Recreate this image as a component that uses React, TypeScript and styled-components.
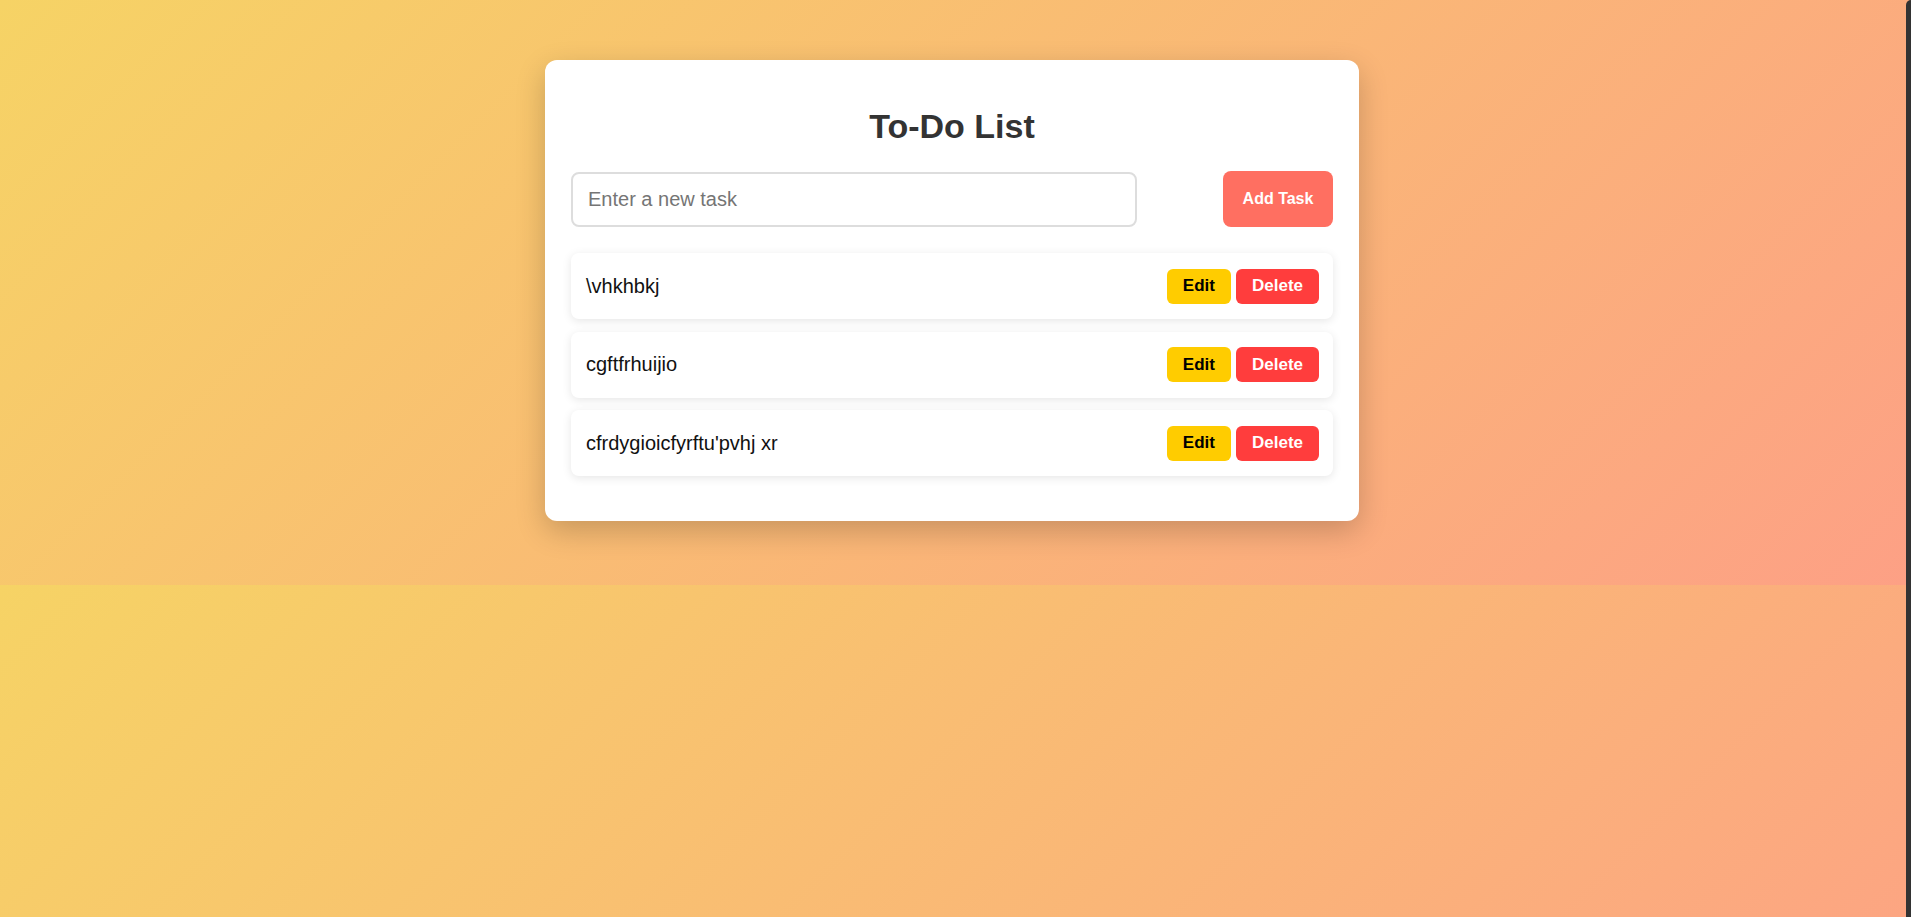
import { useState } from 'react';
import styled, { createGlobalStyle } from 'styled-components';

type Task = { id: number; text: string };

const initialTasks: Task[] = [
  { id: 1, text: '\\vhkhbkj' },
  { id: 2, text: 'cgftfrhuijio' },
  { id: 3, text: "cfrdygioicfyrftu'pvhj xr" }
];

const App = () => {
  const [tasks, setTasks] = useState<Task[]>(initialTasks);
  const [value, setValue] = useState('');

  const addTask = () => {
    if (!value.trim()) return;
    setTasks([...tasks, { id: Date.now(), text: value.trim() }]);
    setValue('');
  };

  const removeTask = (id: number) => setTasks(tasks.filter(t => t.id !== id));

  return (
    <>
      <GlobalStyle />
      <Page>
        <Card>
          <Title>To-Do List</Title>
          <InputRow>
            <TaskInput
              placeholder="Enter a new task"
              value={value}
              onChange={e => setValue(e.target.value)}
              onKeyDown={e => e.key === 'Enter' && addTask()}
            />
            <AddButton onClick={addTask}>Add Task</AddButton>
          </InputRow>
          <TaskList>
            {tasks.map(task => (
              <TaskItem key={task.id}>
                <TaskText>{task.text}</TaskText>
                <Actions>
                  <ActionButton variant="edit">Edit</ActionButton>
                  <ActionButton variant="delete" onClick={() => removeTask(task.id)}>
                    Delete
                  </ActionButton>
                </Actions>
              </TaskItem>
            ))}
          </TaskList>
        </Card>
      </Page>
      <WindowEdge />
    </>
  );
};

const GlobalStyle = createGlobalStyle`
  html {
    margin: 0;
  }
  body {
    margin: 0;
    font-family: 'Liberation Sans', Arial, sans-serif;
    background: linear-gradient(135deg, #f6d365 0%, #fda085 100%);
  }
`;

const Page = styled.div`
  display: flex;
  justify-content: center;
  padding: 60px 7px 64px 0;
`;

const Card = styled.div`
  width: 814px;
  box-sizing: border-box;
  background: #fff;
  border-radius: 12px;
  padding: 26px 26px 26px;
  box-shadow: 0 10px 30px rgba(0, 0, 0, 0.2);
`;

const Title = styled.h1`
  margin: 21px 0 25px;
  text-align: center;
  font-size: 34px;
  line-height: 39px;
  font-weight: 700;
  color: #333;
`;

const InputRow = styled.div`
  display: flex;
  align-items: center;
  justify-content: space-between;
`;

const TaskInput = styled.input`
  width: 566px;
  height: 55px;
  box-sizing: border-box;
  padding: 0 15px;
  border: 2px solid #ddd;
  border-radius: 8px;
  font-family: 'Liberation Sans', Arial, sans-serif;
  font-size: 20px;
  color: #333;
  outline: none;

  &::placeholder {
    color: #757575;
  }
`;

const AddButton = styled.button`
  width: 110px;
  height: 56px;
  border: none;
  border-radius: 8px;
  background: #ff6f61;
  color: #fff;
  font-family: 'Liberation Sans', Arial, sans-serif;
  font-size: 16px;
  font-weight: 700;
  cursor: pointer;
`;

const TaskList = styled.ul`
  list-style: none;
  margin: 26px 0 19px;
  padding: 0;
  display: flex;
  flex-direction: column;
  gap: 12.5px;
`;

const TaskItem = styled.li`
  display: flex;
  align-items: center;
  justify-content: space-between;
  height: 66px;
  box-sizing: border-box;
  padding: 0 14px 0 15px;
  background: #fff;
  border-radius: 8px;
  box-shadow: 0 2px 10px rgba(0, 0, 0, 0.1);
`;

const TaskText = styled.span`
  font-size: 20px;
  color: #111;
`;

const Actions = styled.div`
  display: flex;
  gap: 5px;
`;

const ActionButton = styled.button<{ variant: 'edit' | 'delete' }>`
  height: 35px;
  padding: 0 16px;
  border: none;
  border-radius: 6px;
  font-family: 'Liberation Sans', Arial, sans-serif;
  font-size: 17px;
  font-weight: 700;
  cursor: pointer;
  background: ${({ variant }) => (variant === 'edit' ? '#ffcc00' : '#ff3d3d')};
  color: ${({ variant }) => (variant === 'edit' ? '#000' : '#fff')};
`;

const WindowEdge = styled.div`
  position: fixed;
  top: 0;
  right: 0;
  width: 5px;
  height: 100%;
  background: #333;
  border-top-left-radius: 6px;
`;

export default App;
